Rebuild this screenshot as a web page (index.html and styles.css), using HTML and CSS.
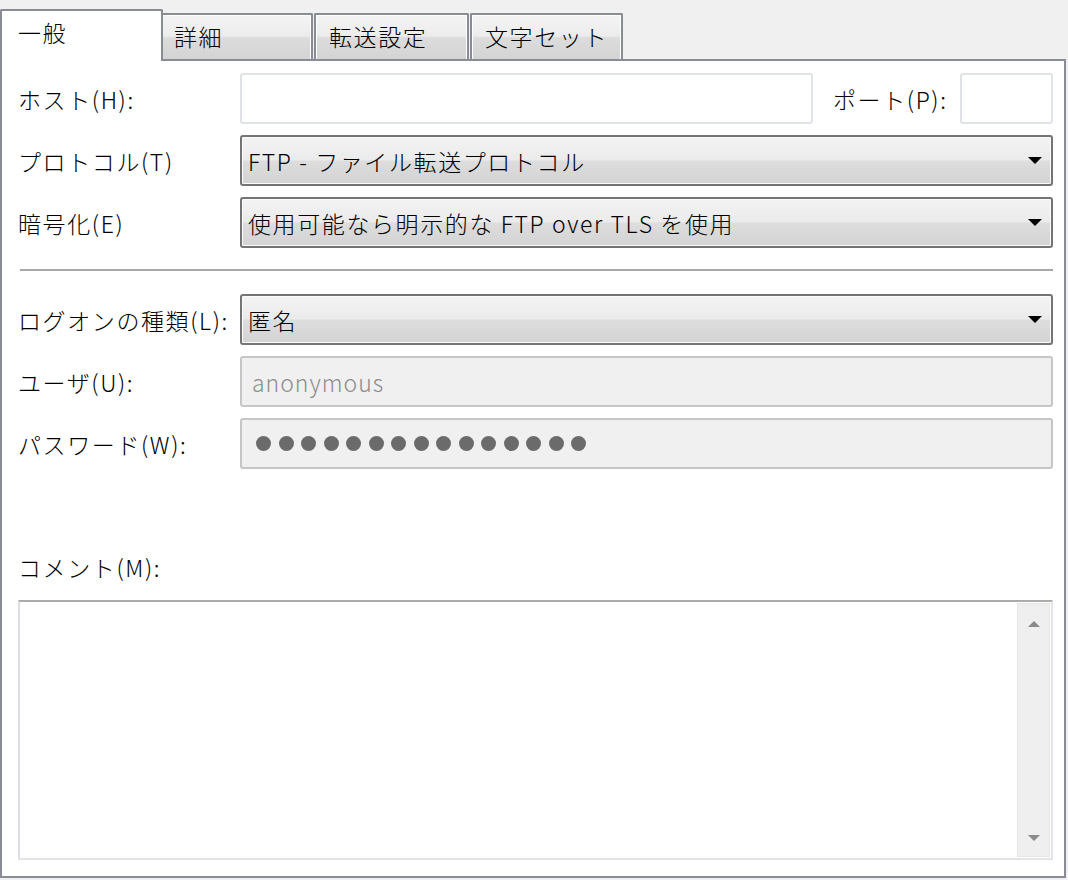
FILE: index.html
```html
<!DOCTYPE html>
<html lang="ja">
<head>
    <meta charset="UTF-8">
    <title>サイト設定</title>
    <link rel="stylesheet" href="styles.css">
</head>
<body>
    <div class="dialog">
        <div class="tabs">
            <div class="tab active">一般</div>
            <div class="tab first">詳細</div>
            <div class="tab wide">転送設定</div>
            <div class="tab">文字セット</div>
        </div>

        <div class="panel">
            <div class="row">
                <label class="label">ホスト(H):</label>
                <div class="field host"></div>
                <label class="port-label">ポート(P):</label>
                <div class="field port"></div>
            </div>

            <div class="row">
                <label class="label">プロトコル(T)</label>
                <div class="select">FTP - ファイル転送プロトコル<span class="arrow"></span></div>
            </div>

            <div class="row">
                <label class="label">暗号化(E)</label>
                <div class="select">使用可能なら明示的な FTP over TLS を使用<span class="arrow"></span></div>
            </div>

            <div class="separator"></div>

            <div class="row">
                <label class="label">ログオンの種類(L):</label>
                <div class="select">匿名<span class="arrow"></span></div>
            </div>

            <div class="row">
                <label class="label">ユーザ(U):</label>
                <div class="field disabled">anonymous</div>
            </div>

            <div class="row">
                <label class="label">パスワード(W):</label>
                <div class="field disabled dots">
                    <span></span><span></span><span></span><span></span><span></span>
                    <span></span><span></span><span></span><span></span><span></span>
                    <span></span><span></span><span></span><span></span><span></span>
                </div>
            </div>

            <label class="comment-label">コメント(M):</label>
            <div class="memo">
                <div class="memo-text"></div>
                <div class="scrollbar">
                    <span class="up"></span>
                    <span class="down"></span>
                </div>
            </div>
        </div>
    </div>
</body>
</html>
```

FILE: styles.css
```css
/* 設定ダイアログ */
body {
    margin: 0;
    background-color: #f0f0f0;
    font-family: "Noto Sans CJK JP", "Noto Sans", sans-serif;
    font-size: 23px;
    font-weight: 300;
    letter-spacing: 1.6px;
    color: #000;
}

.dialog {
    width: 1066px;
    height: 878px;
    display: flex;
    flex-direction: column;
}

/* タブ */
.tabs {
    display: flex;
    align-items: flex-end;
    height: 60px;
}

.tab {
    box-sizing: border-box;
    height: 46px;
    width: 153px;
    margin-left: 1px;
    padding: 4px 0 0 13px;
    line-height: 34px;
    border: 2px solid #898c94;
    border-bottom: none;
    border-radius: 2px 2px 0 0;
    background: linear-gradient(#f4f4f4, #ececec 48%, #dcdcdc 52%, #d4d4d4);
    box-shadow: inset 1px 1px 0 #fff, inset -1px 0 0 #fff;
}

.tab.first {
    margin-left: -4px;
    width: 154px;
}

.tab.wide {
    width: 155px;
}

.tab.active {
    position: relative;
    z-index: 1;
    width: 163px;
    height: 52px;
    margin: 0 0 -2px 0;
    padding: 4px 0 0 16px;
    background: #fff;
    box-shadow: none;
}

/* パネル */
.panel {
    flex: 1;
    background-color: #fff;
    border: 2px solid #898c94;
    padding: 12px 11px 16px 16px;
    display: flex;
    flex-direction: column;
}

.row {
    display: flex;
    align-items: center;
    height: 51px;
    margin-bottom: 11px;
}

.label {
    width: 222px;
    flex-shrink: 0;
    white-space: nowrap;
}

.port-label {
    width: 115px;
    flex-shrink: 0;
    margin: 0 12px 0 20px;
    white-space: nowrap;
}

.field {
    box-sizing: border-box;
    height: 51px;
    flex: 1;
    border: 2px solid #dfe2e7;
    border-radius: 3px;
    background-color: #fff;
    padding: 0 10px;
    display: flex;
    align-items: center;
}

.field.port {
    flex: none;
    width: 93px;
}

.field.disabled {
    background-color: #f0f0f0;
    border-color: #c6c6c6;
    color: #8c8c8c;
    letter-spacing: 1px;
}

.dots {
    gap: 7.5px;
    padding-left: 14px;
}

.dots span {
    width: 15px;
    height: 15px;
    border-radius: 50%;
    background-color: #6b6b6b;
}

.select {
    box-sizing: border-box;
    height: 51px;
    flex: 1;
    position: relative;
    border: 2px solid #747474;
    border-radius: 3px;
    padding: 0 6px;
    display: flex;
    align-items: center;
    background: linear-gradient(#f3f3f3, #ebebeb 48%, #dddddd 52%, #d3d3d3);
    box-shadow: inset 0 0 0 1px #fbfbfb;
    white-space: nowrap;
}

.arrow {
    position: absolute;
    right: 9px;
    top: 20px;
    border-left: 7px solid transparent;
    border-right: 7px solid transparent;
    border-top: 7px solid #000;
}

.separator {
    height: 2px;
    background-color: #a8a8a8;
    margin: 10px 0 23px 2px;
}

.comment-label {
    line-height: 30px;
    margin: 72px 0 18px 0;
}

.memo {
    height: 260px;
    box-sizing: border-box;
    display: flex;
    border: 2px solid #e2e4ea;
    border-top-color: #ababab;
    border-left-color: #dedfe6;
    background-color: #fff;
}

.memo-text {
    flex: 1;
}

.scrollbar {
    width: 31px;
    margin: 1px 1px 1px 0;
    background-color: #efefef;
    border: 1px solid #e6e6e6;
    display: flex;
    flex-direction: column;
    justify-content: space-between;
    align-items: center;
    padding: 17px 0 15px 0;
}

.up {
    border-left: 6px solid transparent;
    border-right: 6px solid transparent;
    border-bottom: 6px solid #8a8a8a;
}

.down {
    border-left: 6px solid transparent;
    border-right: 6px solid transparent;
    border-top: 6px solid #8a8a8a;
}
```
